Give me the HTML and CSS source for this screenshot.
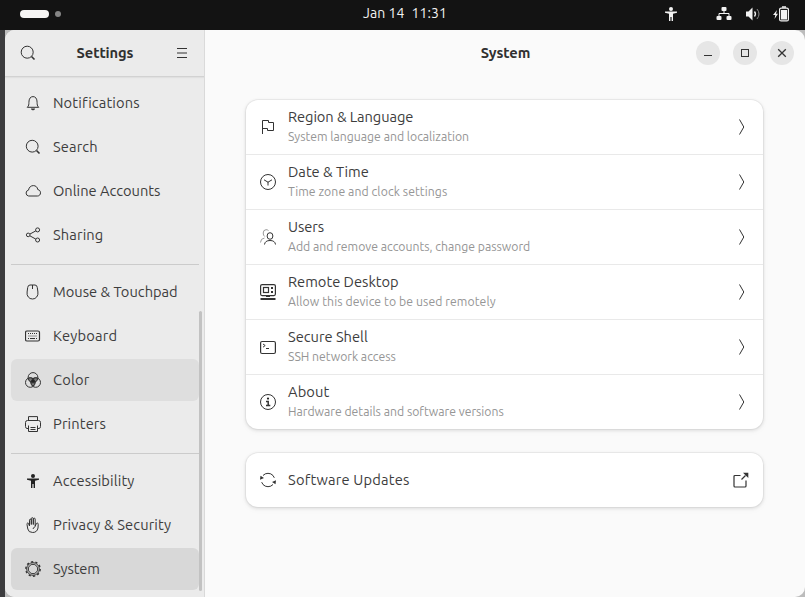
FILE: index.html
```html
<!DOCTYPE html>
<html lang="en">
<head>
<meta charset="utf-8">
<title>Settings</title>
<link rel="stylesheet" href="styles.css">
</head>
<body>
<header class="topbar">
  <div class="workspaces"><span class="pill"></span><span class="dot"></span></div>
  <div class="clock"><span>Jan 14</span><span>11:31</span></div>
  <div class="tray">
    <svg class="tray-person" width="16" height="16" viewBox="0 0 16 16" fill="#f2f2f2"><circle cx="8" cy="3" r="2"/><path d="M2 5.500h12v1.300l-4 .9V15H8.600v-4H7.400v4H6V7.700l-4-.9z"/></svg>
    <svg class="tray-net" width="16" height="16" viewBox="0 0 16 16" fill="#f2f2f2"><rect x="5.500" y="1" width="5" height="4" rx="1"/><rect x=".5" y="10" width="5" height="4" rx="1"/><rect x="10.500" y="10" width="5" height="4" rx="1"/><path d="M8 5v3M3 10V7.500h10V10" fill="none" stroke="#f2f2f2"/></svg>
    <svg class="tray-sound" width="16" height="16" viewBox="0 0 16 16"><path d="M1 5.500h2.500L7.500 1.500v13L3.500 10.500H1z" fill="#f2f2f2"/><path d="M9.500 5.500q2 2.500 0 5" fill="none" stroke="#f2f2f2" stroke-width="1.300"/><path d="M12 3q4 5 0 10" fill="none" stroke="#888"/></svg>
    <svg width="18" height="16" viewBox="0 0 18 16"><path d="M5 4L1 9h2.300L2.500 13 6 7.800H4z" fill="#f2f2f2"/><rect x="7.600" y="2.100" width="8.800" height="12.800" rx="1.500" fill="none" stroke="#f2f2f2" stroke-width="1.200"/><rect x="9" y="4" width="6" height="9.500" fill="#f2f2f2"/><path d="M10 1h4" stroke="#f2f2f2" stroke-width="1.500"/></svg>
  </div>
</header>
<div class="desktop">
<main class="window">
  <aside class="sidebar">
    <div class="side-head">
      <svg width="16" height="16" viewBox="0 0 16 16" class="ico"><circle cx="7.200" cy="7.200" r="6"/><path d="M11.500 11.500l3 3" stroke-width="1.600"/></svg>
      <h1>Settings</h1>
      <svg width="16" height="16" viewBox="0 0 16 16" class="ico"><path d="M3 3.500h10M3 8h10M3 12.500h10" /></svg>
    </div>
    <nav class="list">
      <a class="item"><svg width="16" height="16" viewBox="0 0 16 16" class="ico"><path d="M2.200 12.300c1.700-1.300 1.700-3 1.700-5C3.900 3.600 5.500 1.600 8 1.600s4.100 2 4.100 5.700c0 2 0 3.700 1.700 5z"/><path d="M6.400 14h3.200L8 15z" fill="#333"/></svg><span class="wide">Notifications</span></a>
      <a class="item"><svg width="16" height="16" viewBox="0 0 16 16" class="ico"><circle cx="7.200" cy="7.200" r="5.900"/><path d="M11.500 11.500l3 3" stroke-width="1.600"/></svg><span class="wide">Search</span></a>
      <a class="item"><svg width="16" height="16" viewBox="0 0 16 16" class="ico"><path d="M3.600 13A3 3 0 0 1 3.500 7.100C4 4.200 6 2.600 8.300 2.600c2.400 0 4.100 1.500 4.500 4 1.700.3 2.700 1.500 2.700 3.200 0 1.900-1.300 3.200-3.100 3.200z"/></svg><span>Online Accounts</span></a>
      <a class="item"><svg width="16" height="16" viewBox="0 0 16 16" class="ico"><circle cx="3.200" cy="7.900" r="1.800"/><circle cx="12.600" cy="2.900" r="2"/><circle cx="12.600" cy="13" r="2"/><path d="M5 7l5.800-3.100M5 8.900l5.800 3.200"/></svg><span class="wide">Sharing</span></a>
      <hr>
      <a class="item"><svg width="16" height="16" viewBox="0 0 16 16" class="ico"><path d="M5 1h5q2 0 2.300 2.500L12.900 8q.5 3-1.200 5-1.500 2-4.200 2T3.300 13Q1.600 11 2.100 8l.6-4.500Q3 1 5 1zM7.500 1v4"/></svg><span>Mouse &amp; Touchpad</span></a>
      <a class="item"><svg width="16" height="16" viewBox="0 0 16 16" class="ico"><rect x=".5" y="3" width="14" height="10" rx="1.500" stroke-width="1.200"/><path d="M3 5.500h10M3.500 8h8.500" stroke-dasharray="1 1"/><path d="M5 10.500h5M3 10.500h1M11 10.500h1"/></svg><span class="wider">Keyboard</span></a>
      <a class="item hover"><svg width="16" height="16" viewBox="0 0 16 16" class="ico"><circle cx="8" cy="5.500" r="4.900"/><circle cx="5.300" cy="10.500" r="4.800"/><circle cx="10.700" cy="10.500" r="4.800"/><path d="M3.200 6.200q2.400-1 4.800.5 2.400-1.500 4.800-.5-.5 2.800-2.700 4-.2 2.500-2.100 4-1.900-1.500-2.100-4-2.200-1.200-2.700-4z" fill="#777"/><path d="M5.600 9.800L8 6.600l2.400 3.200L8 11z" fill="#222"/></svg><span class="wider">Color</span></a>
      <a class="item"><svg width="16" height="16" viewBox="0 0 16 16" class="ico"><path d="M3.500 4V.6h9V4M3.500 12.500H2Q.5 12.300.5 10.500v-4Q.5 4.500 2.500 4.500h11q2 0 2 2v4q0 1.800-1.500 2h-1.500M3.500 9.500v6h9v-6M5.500 11.500h5M5.500 13.500h5"/></svg><span class="wide">Printers</span></a>
      <hr>
      <a class="item"><svg width="16" height="16" viewBox="0 0 16 16" fill="#222"><circle cx="8" cy="3" r="2"/><path d="M2 5.500h12v1.300l-4 .9V15H8.600v-4H7.400v4H6V7.700l-4-.9z"/></svg><span class="wide">Accessibility</span></a>
      <a class="item"><svg width="16" height="16" viewBox="0 0 16 16" class="ico"><path d="M4.500 9V3.200q0-1 .9-1t.9 1V7.500 1.700q0-1 1-1t1 1V7.500 2.200q0-1 1-1t.9 1V9l1.200-2.500q.7-1 1.500-.2.500.5.300 1.500L13 11q-1 4.500-5.300 4.500T2.800 12L2 7.500q-.2-1.300.6-1.500.8-.1 1 .8L4.500 9M10.500 9.500Q8.500 10 8 12"/></svg><span class="wide">Privacy &amp; Security</span></a>
      <a class="item active"><svg width="16" height="16" viewBox="0 0 16 16" class="ico"><circle cx="8" cy="8" r="6.300"/><circle cx="8" cy="8" r="4.700"/><circle cx="8" cy="8" r="7.200" stroke-width="1.400" stroke-dasharray="2.260 2.260"/></svg><span class="tight">System</span></a>
      <i class="scroll"></i>
    </nav>
  </aside>
  <section class="content">
    <div class="head">
      <h2>System</h2>
      <div class="controls">
        <button aria-label="Minimize"><svg width="16" height="16" viewBox="0 0 16 16" class="ico"><path d="M4 10.500h8"/></svg></button>
        <button aria-label="Maximize"><svg width="16" height="16" viewBox="0 0 16 16" class="ico"><rect x="4.500" y="4.500" width="7" height="7"/></svg></button>
        <button aria-label="Close"><svg width="16" height="16" viewBox="0 0 16 16" class="ico"><path d="M4.200 4.200l7.600 7.600M11.800 4.200l-7.600 7.600" stroke-width="1.300"/></svg></button>
      </div>
    </div>
    <div class="card">
      <div class="row"><svg width="16" height="16" viewBox="0 0 16 16" class="ico"><path d="M2.500 15V1.500h6v2h5v8h-6v-2h-5"/></svg><div class="text"><b class="tight">Region &amp; Language</b><small>System language and localization</small></div><svg width="8" height="16" viewBox="0 0 8 16" class="ico"><path d="M1.500 .5l4.300 7.500-4.300 7.500"/></svg></div>
      <div class="row"><svg width="16" height="16" viewBox="0 0 16 16" class="ico"><circle cx="8" cy="8" r="7.500"/><path d="M4 5.800l4 2.400 4-2.400M8 8v3.500"/></svg><div class="text"><b>Date &amp; Time</b><small class="wide">Time zone and clock settings</small></div><svg width="8" height="16" viewBox="0 0 8 16" class="ico"><path d="M1.500 .5l4.300 7.500-4.300 7.500"/></svg></div>
      <div class="row"><svg width="16" height="16" viewBox="0 0 16 16" class="ico"><path d="M8.500 1.500Q7.500.7 6 .7 3.200.9 3.200 4q0 2.500 1.500 3.500M.5 13.500Q.5 9.500 4.500 9" stroke="#999"/><ellipse cx="10" cy="7" rx="2.900" ry="3.300"/><path d="M4.500 15.500q.5-4 5.500-4t5.500 4"/></svg><div class="text"><b class="tight">Users</b><small>Add and remove accounts, change password</small></div><svg width="8" height="16" viewBox="0 0 8 16" class="ico"><path d="M1.500 .5l4.300 7.500-4.300 7.500"/></svg></div>
      <div class="row"><svg width="16" height="16" viewBox="0 0 16 16" class="ico"><rect x=".6" y=".6" width="14.800" height="11" rx="1.500" stroke-width="1.200"/><rect x="3.500" y="3.500" width="5" height="5" stroke-width="1.200"/><path d="M11 4h2M11 8h2" stroke-width="2"/><path d="M6 12.500h4"/><path d="M.5 15h15" stroke-width="2"/></svg><div class="text"><b>Remote Desktop</b><small class="wide">Allow this device to be used remotely</small></div><svg width="8" height="16" viewBox="0 0 8 16" class="ico"><path d="M1.500 .5l4.300 7.500-4.300 7.500"/></svg></div>
      <div class="row"><svg width="16" height="16" viewBox="0 0 16 16" class="ico"><rect x=".6" y="2.500" width="14.800" height="12" rx="1.500" stroke-width="1.200"/><path d="M3 5l2.200 1.500L3 8.200M6 9.500h3"/></svg><div class="text"><b>Secure Shell</b><small>SSH network access</small></div><svg width="8" height="16" viewBox="0 0 8 16" class="ico"><path d="M1.500 .5l4.300 7.500-4.300 7.500"/></svg></div>
      <div class="row"><svg width="16" height="16" viewBox="0 0 16 16" class="ico"><circle cx="8" cy="8" r="7.500"/><circle cx="8" cy="4.600" r="1.100" fill="#222" stroke="none"/><path d="M6 7.500h2.200v4M6 11.500h4.300" stroke-width="1.500"/></svg><div class="text"><b class="wide">About</b><small>Hardware details and software versions</small></div><svg width="8" height="16" viewBox="0 0 8 16" class="ico"><path d="M1.500 .5l4.300 7.500-4.300 7.500"/></svg></div>
    </div>
    <div class="card">
      <div class="row single"><svg width="16" height="16" viewBox="0 0 16 16" class="ico"><path d="M3 3.500Q5 1.300 8 1.300t5 2.200l1.300 2.300M13 12.500Q11 14.700 8 14.700t-5-2.200L1.700 10.200"/><path d="M0 7.800L.5 3.700l3.500 2.300zM16 8.200l-.5 4.100-3.500-2.300z" fill="#333" stroke="none"/></svg><div class="text"><b class="wider">Software Updates</b></div><svg width="16" height="16" viewBox="0 0 16 16" class="ico ext"><path d="M7.500 3.500H2Q1 3.500 1 4.500V14q0 1 1 1h10q1 0 1-1V8.500M8.500 7.500l4-4" stroke-width="1.200"/><path d="M10 .8h5.300V6z" fill="#333" stroke="none"/></svg></div>
    </div>
  </section>
</main>
</div>
</body>
</html>
```
FILE: styles.css
```css
* { box-sizing: border-box; }
body { margin: 0; width: 805px; height: 597px; overflow: hidden; font: 14.667px/20px Ubuntu, "Noto Sans", sans-serif; color: #3d3d3d; }
svg { display: block; flex: none; }
.ico { fill: none; stroke: #333; }
h1, h2 { margin: 0; font-size: 14.667px; line-height: 20px; font-weight: 700; color: #303030; letter-spacing: -.1px; }
span, b, small { white-space: nowrap; }
.topbar { height: 30px; background: #131313; display: grid; grid-template-columns: 1fr auto 1fr; align-items: center; padding: 0 15px 0 20px; }
.workspaces { display: flex; align-items: center; gap: 6px; margin-top: -2px; }
.pill { width: 29px; height: 8px; border-radius: 4px; background: #f6f5f4; }
.dot { width: 6px; height: 6px; border-radius: 3px; background: #858585; }
.clock { display: flex; gap: 7px; color: #f2f2f2; margin-top: -4px; font-size: 14px; letter-spacing: .1px; }
.tray { display: flex; justify-content: flex-end; align-items: center; margin-top: -2px; }
.tray-person { margin-right: 37px; }
.tray-net { margin-right: 13px; }
.tray-sound { margin-right: 11px; }
.desktop { height: 567px; padding-left: 5px; background: linear-gradient(90deg, #3c3c3e 5px, #bcbcbc 5px); }
.window { height: 567px; display: flex; border-radius: 10px; overflow: hidden; background: #fafafa; }
.sidebar { width: 200px; flex: none; background: #ebebeb; border-right: 1px solid #d9d9d9; }
.side-head { height: 47px; display: flex; justify-content: space-between; align-items: center; padding: 0 14px 0 15px; border-bottom: 1px solid #d2d2d2; box-shadow: 0 1px 1px #e0e0e0; }
.list { position: relative; height: 520px; padding: 5px 5px 0 6px; }
.item { display: flex; align-items: center; gap: 12px; height: 42px; margin-bottom: 2px; padding: 0 14px; border-radius: 6px; }
.wide { letter-spacing: .13px; }
.wider { letter-spacing: .2px; }
.tight { letter-spacing: -.08px; }
.hover { background: #dedede; }
.active { background: #d8d8d8; }
hr { border: 0; height: 1px; background: #cbcbcb; margin: 8px 0 6px; }
.scroll { position: absolute; left: 194px; top: 234px; width: 3px; height: 280px; border-radius: 2px; background: #c2c2c2; }
.content { flex: 1; min-width: 0; }
.head { height: 46px; display: grid; grid-template-columns: 1fr auto 1fr; align-items: center; padding: 0 11px 0 12px; margin-bottom: 24px; }
.head h2 { grid-column: 2; }
.controls { display: flex; justify-content: flex-end; gap: 13px; }
button { width: 24px; height: 24px; border: 0; padding: 4px; border-radius: 50%; background: #e6e6e6; }
.card { width: 517px; margin: 0 0 24px 41px; border-radius: 12px; background: #fff; box-shadow: 0 0 0 1px #0000000a, 0 1px 3px 1px #00000014, 0 2px 6px 1px #00000008; }
.row { height: 55px; display: flex; align-items: center; gap: 12px; padding: 0 17px 0 14px; border-bottom: 1px solid #e9e9e9; }
.row:last-child { height: 54px; border: 0; }
.row.single { padding-right: 14px; }
.text { flex: 1; display: flex; flex-direction: column; margin-top: -1px; }
b { font-weight: 400; line-height: 20px; }
small { font-size: 12.22px; line-height: 19px; color: #959595; }
small.wide { letter-spacing: .08px; }
```
